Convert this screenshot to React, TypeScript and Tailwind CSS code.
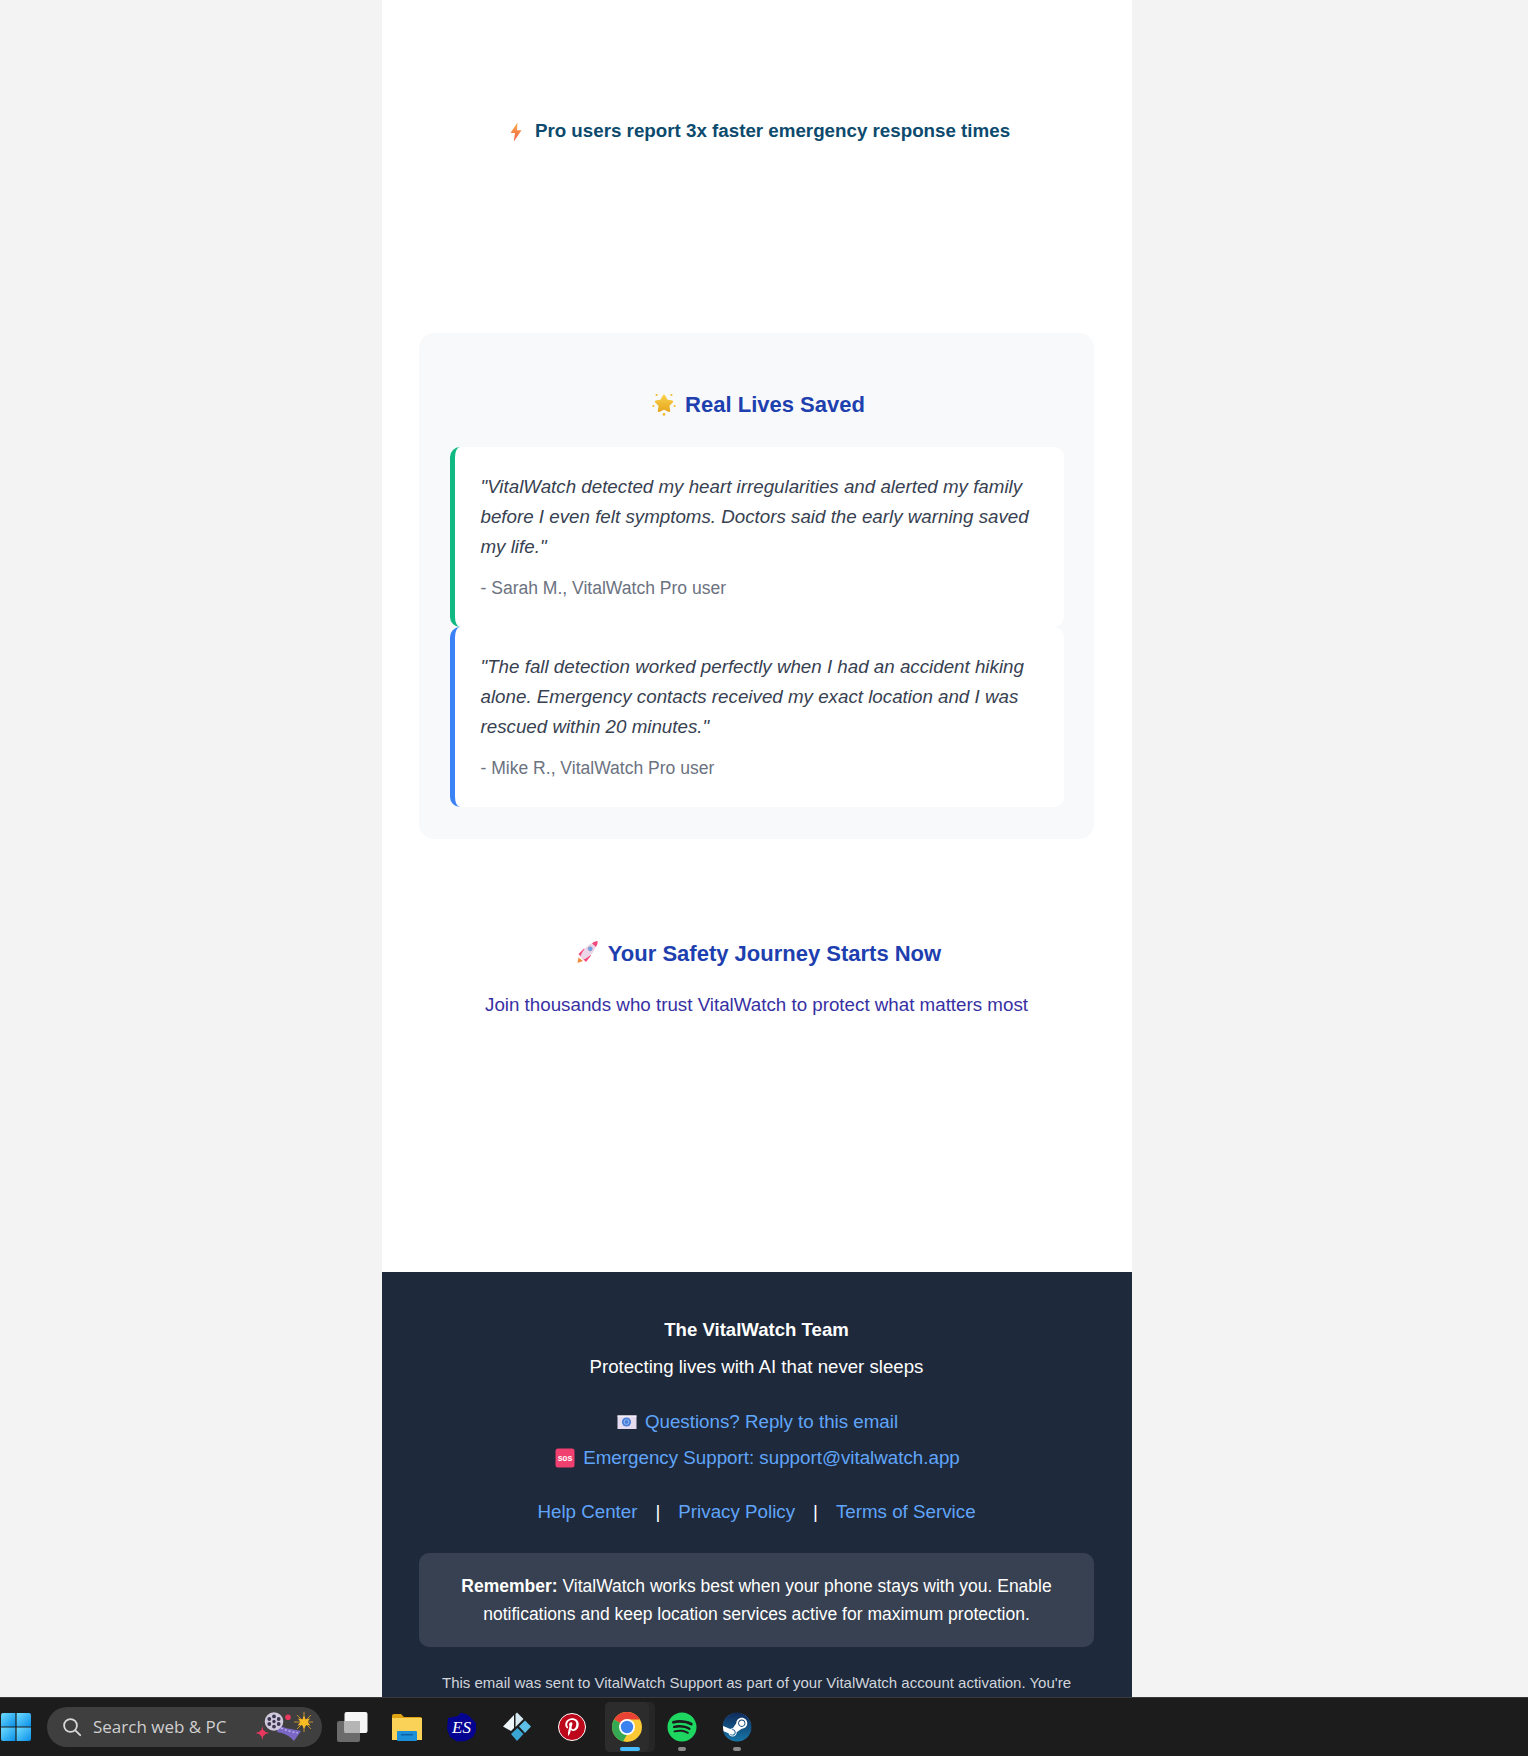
import React from "react";
import { FaPinterestP, FaSpotify, FaSteam } from "react-icons/fa";

const Bolt = () => (
  <svg width="14" height="20" viewBox="0 0 14 20" className="shrink-0">
    <defs>
      <linearGradient id="bolt" x1="0" y1="0" x2="0" y2="1">
        <stop offset="0" stopColor="#fcb04a" />
        <stop offset="1" stopColor="#ee5a44" />
      </linearGradient>
    </defs>
    <path d="M8.5 0.5 L1.5 11 H6 L4.8 19.5 L12.5 8.2 H8 Z" fill="url(#bolt)" />
  </svg>
);

const StarBadge = () => (
  <svg width="24" height="24" viewBox="0 0 24 24" className="shrink-0">
    <defs>
      <linearGradient id="star" x1="0" y1="0" x2="0" y2="1">
        <stop offset="0" stopColor="#f8d048" />
        <stop offset="1" stopColor="#e8a820" />
      </linearGradient>
    </defs>
    <path d="M12 3.6 L14.8 8.6 L20.2 9.6 L16.4 13.6 L17.2 19 L12 16.6 L6.8 19 L7.6 13.6 L3.8 9.6 L9.2 8.6 Z" fill="url(#star)" stroke="url(#star)" strokeWidth="2" strokeLinejoin="round" />
    <circle cx="12" cy="22.4" r="1.4" fill="#f2bd2c" />
    <circle cx="1.4" cy="14" r="1.1" fill="#f2bd2c" />
    <circle cx="22.6" cy="14" r="1.1" fill="#f2bd2c" />
    <circle cx="4.6" cy="3" r="1.1" fill="#f2bd2c" />
    <circle cx="19.4" cy="3" r="1.1" fill="#f2bd2c" />
  </svg>
);

const Rocket = () => (
  <svg width="24" height="24" viewBox="0 0 24 24" className="shrink-0">
    <path d="M2.5 23 L3.5 17.5 L8 21 Z" fill="#f28a3c" />
    <path d="M3.5 14 L9 8.5 L11 10 L6.5 17.5 Z" fill="#f5477a" />
    <path d="M11 22 L16 15.5 L13.5 13 L7 18 Z" fill="#f5477a" />
    <path d="M5.5 16 C8 9 14 4 18.5 2.5 L21 5.5 C20 11 15 17 8.5 19.5 Z" fill="#ead6e6" />
    <path d="M17 3.2 C19 1.8 21.5 1 22.5 1 C23 2 22.2 5 21 7 Z" fill="#f5477a" />
    <circle cx="15.2" cy="8.8" r="2.1" fill="#6aa6ec" stroke="#8d8fb8" strokeWidth="0.6" />
  </svg>
);

const Envelope = () => (
  <svg width="20" height="20" viewBox="0 0 20 20" className="shrink-0">
    <rect x="0.5" y="3.5" width="19" height="13.5" fill="#e6dcf0" />
    <rect x="0.5" y="3.5" width="19" height="1.2" fill="#f6f2fa" />
    <circle cx="9.5" cy="10" r="4.6" fill="#4a80d8" />
    <circle cx="9.5" cy="10" r="2.4" fill="none" stroke="#9dbdf0" strokeWidth="0.9" />
  </svg>
);

const Sos = () => (
  <svg width="20" height="20" viewBox="0 0 20 20" className="shrink-0">
    <rect x="0.5" y="0.5" width="19" height="19" rx="2.5" fill="#f0406f" />
    <text x="10" y="13" textAnchor="middle" fontSize="8" fontWeight="700" fill="#ffffff" fontFamily="'Liberation Mono', monospace">SOS</text>
  </svg>
);

const Quote = ({ border, text, author }: { border: string; text: string; author: string }) => (
  <div className={`rounded-[10px] bg-white border-l-[5px] ${border} pl-[26px] pr-[24px] pt-[25px] pb-[24px]`}>
    <p className="italic text-[18.75px] leading-[30px] text-[#374151] m-0">{text}</p>
    <p className="text-[17.55px] leading-[30px] text-[#6b7280] mt-[11px]">{author}</p>
  </div>
);

const WindowsLogo = () => (
  <svg width="30" height="30" viewBox="0 0 30 30">
    <defs>
      <linearGradient id="win" x1="0" y1="0" x2="1" y2="1">
        <stop offset="0" stopColor="#6fdcff" />
        <stop offset="1" stopColor="#0a8fe8" />
      </linearGradient>
    </defs>
    <path d="M0 3 a2 2 0 0 1 2 -2 H14.4 V14.4 H0 Z" fill="url(#win)" />
    <path d="M15.6 1 H28 a2 2 0 0 1 2 2 V14.4 H15.6 Z" fill="url(#win)" />
    <path d="M0 15.6 H14.4 V29 H2 a2 2 0 0 1 -2 -2 Z" fill="url(#win)" />
    <path d="M15.6 15.6 H30 V27 a2 2 0 0 1 -2 2 H15.6 Z" fill="url(#win)" />
  </svg>
);

const SearchGlyph = () => (
  <svg width="20" height="20" viewBox="0 0 20 20" fill="none" stroke="#d8d8d8" strokeWidth="1.8" strokeLinecap="round" className="shrink-0">
    <circle cx="8.5" cy="8.5" r="6.4" />
    <path d="M13.3 13.3 L18.2 18.2" />
  </svg>
);

const FilmArt = () => (
  <svg width="58" height="30" viewBox="0 0 58 30" className="shrink-0">
    <path d="M24 13 C30 17 38 17 46 19 L39 29 C34 23 28 21 22 20 Z" fill="#7a68c4" />
    <path d="M26 16 C32 19 38 20 43 21" stroke="#c4b8ec" strokeWidth="1.2" fill="none" strokeDasharray="2 2" />
    <circle cx="19" cy="9.5" r="9.3" fill="#d0c8dc" />
    <circle cx="19" cy="9.5" r="1.7" fill="#3c3750" />
    <circle cx="19" cy="4.4" r="1.9" fill="#3c3750" />
    <circle cx="19" cy="14.6" r="1.9" fill="#3c3750" />
    <circle cx="14.3" cy="7" r="1.9" fill="#3c3750" />
    <circle cx="23.7" cy="7" r="1.9" fill="#3c3750" />
    <circle cx="14.3" cy="12" r="1.9" fill="#3c3750" />
    <circle cx="23.7" cy="12" r="1.9" fill="#3c3750" />
    <path d="M7.3 14 L8.6 19.6 L14.4 21 L8.6 22.4 L7.3 28 L6 22.4 L0.2 21 L6 19.6 Z" fill="#e8385e" />
    <circle cx="7.3" cy="21" r="3" fill="#e8385e" />
    <circle cx="33" cy="5.3" r="2.8" fill="#e8385e" />
    <g stroke="#d89a2c" strokeWidth="0.9">
      <path d="M49 0 V20 M39 10 H58 M42 3 L56 17 M56 3 L42 17" />
    </g>
    <path d="M49 3.5 L50.6 7.6 L55 6.4 L52.6 10 L55.5 13.4 L51.2 13 L49 16.8 L47 13 L42.6 13.4 L45.4 10 L43 6.4 L47.4 7.6 Z" fill="#f8bb24" />
  </svg>
);

const TaskView = () => (
  <svg width="32" height="30" viewBox="0 0 32 30" className="shrink-0">
    <rect x="0" y="9" width="23" height="21" rx="2" fill="#6b6b6b" />
    <rect x="7.5" y="0" width="23" height="21" rx="2" fill="#f6f6f6" />
    <rect x="7.5" y="9" width="15.5" height="12" fill="#b5b5b5" />
  </svg>
);

const Folder = () => (
  <svg width="30" height="28" viewBox="0 0 30 28" className="shrink-0">
    <path d="M0 3 a2 2 0 0 1 2 -2 H9 L12 4 H28 a2 2 0 0 1 2 2 V8 H0 Z" fill="#e0a312" />
    <rect x="0" y="5" width="30" height="22" fill="#fbd258" />
    <rect x="5" y="18" width="20" height="10" rx="1" fill="#1b8fd8" />
    <rect x="9" y="21" width="12" height="1.4" fill="#0f5fa0" />
  </svg>
);

const EsIcon = () => (
  <svg width="30" height="30" viewBox="0 0 30 30">
    <path d="M1 6 L11 4 L14 0.5 L21 3 L25 7 L29 11 L29 19 L26 25 L19 29 L10 29.5 L3 25 L0 17 Z" fill="#040490" />
    <text x="14.5" y="21" textAnchor="middle" fontStyle="italic" fontWeight="400" fontSize="17" fill="#ffffff" fontFamily="'Liberation Serif', serif">ES</text>
  </svg>
);

const Kodi = () => (
  <svg width="30" height="30" viewBox="0 0 30 30">
    <path d="M12 3 L12 16 L9 19 L1 14.5 Z" fill="#eef6fa" />
    <path d="M15 0.5 L21.5 7 L13.5 15 L13.5 2 Z" fill="#d6e9f0" />
    <path d="M23 8.5 L29 14.5 L23 21 L17 14.5 Z" fill="#5cc0e6" />
    <path d="M15.5 16 L21.5 22 L15 29 L9 22 Z" fill="#3aa5d3" />
  </svg>
);

const Chrome = () => (
  <svg width="30" height="30" viewBox="0 0 30 30">
    <circle cx="15" cy="15" r="15" fill="#fcc934" />
    <path d="M15 0 A15 15 0 0 1 28 7.5 H15 A7.5 7.5 0 0 0 8.5 11.2 L2 7.5 A15 15 0 0 1 15 0 Z" fill="#ea4335" />
    <path d="M2 7.5 L8.5 11.2 L15 22.5 L11 29.4 A15 15 0 0 1 2 7.5 Z" fill="#34a853" />
    <circle cx="15" cy="15" r="8" fill="#ffffff" />
    <circle cx="15" cy="15" r="6.2" fill="#3a82f0" />
  </svg>
);

const Cell = ({ active, dot, children }: { active?: boolean; dot?: boolean; children: React.ReactNode }) => (
  <div className={`relative w-[44px] h-[50px] flex items-center justify-center ${active ? "rounded-[5px] bg-[#2c2c2c]" : ""}`}>
    {active && <span className="absolute top-0 -right-[6px] w-[10px] h-[50px] rounded-r-[5px] bg-[#262626]" />}
    {active && <span className="absolute inset-0 rounded-[5px] bg-[#2c2c2c]" />}
    <span className="relative flex items-center justify-center">{children}</span>
    {active && <span className="absolute bottom-[1px] left-[15px] w-[20px] h-[4px] rounded-full bg-[#47bdff]" />}
    {dot && <span className="absolute bottom-[1px] left-[18px] w-[8px] h-[4px] rounded-full bg-[#8a8a8a]" />}
  </div>
);

export default function App() {
  return (
    <div className="h-[1756px] flex flex-col overflow-hidden bg-[#f3f3f3] font-['Liberation_Sans',Arial,sans-serif]">
      <main className="flex-1 min-h-0 overflow-hidden pr-[15px]">
        <div className="w-[750px] mx-auto bg-white">
          <div className="h-[272px] pt-[119px] flex justify-center">
            <div className="h-[25px] flex items-center gap-[12px] text-[18.75px] font-bold text-[#0c4a6e] ml-[6px]">
              <Bolt />
              <span>Pro users report 3x faster emergency response times</span>
            </div>
          </div>

          <div className="px-[37.5px]">
            <section className="mt-[61px] rounded-[15px] bg-[#f8f9fb] px-[30.5px] pt-[30px] pb-[32px]">
              <h2 className="h-[84px] pt-[29px] pl-[4px] flex justify-center gap-[9px] text-[22px] leading-[26px] font-bold text-[#1e40af]">
                <StarBadge />
                <span>Real Lives Saved</span>
              </h2>
              <Quote
                border="border-[#10b981]"
                text={'"VitalWatch detected my heart irregularities and alerted my family before I even felt symptoms. Doctors said the early warning saved my life."'}
                author="- Sarah M., VitalWatch Pro user"
              />
              <Quote
                border="border-[#3b82f6]"
                text={'"The fall detection worked perfectly when I had an accident hiking alone. Emergency contacts received my exact location and I was rescued within 20 minutes."'}
                author="- Mike R., VitalWatch Pro user"
              />
            </section>

            <section className="pt-[101px] h-[433px] text-center">
              <h2 className="pl-[3px] flex justify-center gap-[9px] text-[22px] leading-[28px] font-bold text-[#1e40af]">
                <Rocket />
                <span>Your Safety Journey Starts Now</span>
              </h2>
              <p className="mt-[22px] text-[18.75px] leading-[30px] text-[#3730a3]">
                Join thousands who trust VitalWatch to protect what matters most
              </p>
            </section>
          </div>

          <footer className="bg-[#1e293b] px-[37.5px] pt-[43px] pb-[20px] text-center text-white">
            <p className="text-[18.6px] leading-[30px] font-bold">The VitalWatch Team</p>
            <p className="mt-[7px] text-[18.66px] leading-[30px]">Protecting lives with AI that never sleeps</p>
            <div className="mt-[25px] pl-[2px] text-[18.76px] leading-[30px] text-[#60a5fa]">
              <div className="mt-[6px] flex justify-center items-center gap-[8px]"><Envelope /><span>Questions? Reply to this email</span></div>
              <div className="mt-[6px] flex justify-center items-center gap-[8px]"><Sos /><span>Emergency Support: support@vitalwatch.app</span></div>
            </div>
            <div className="mt-[24px] flex justify-center gap-[18px] text-[18.76px] leading-[30px]">
              <span className="text-[#60a5fa]">Help Center</span>
              <span>|</span>
              <span className="text-[#60a5fa]">Privacy Policy</span>
              <span>|</span>
              <span className="text-[#60a5fa]">Terms of Service</span>
            </div>
            <div className="mt-[26px] rounded-[10px] bg-[#374151] py-[19px] px-[30px] text-[17.5px] leading-[28px]">
              <strong className="font-bold">Remember:</strong> VitalWatch works best when your phone stays with you. Enable notifications and keep location services active for maximum protection.
            </div>
            <p className="mt-[24px] text-[15px] leading-[24px] text-[#d1d5db]">
              This email was sent to VitalWatch Support as part of your VitalWatch account activation. You're receiving this because you signed up for protection.
            </p>
          </footer>
        </div>
      </main>

      <div className="h-[59px] shrink-0 bg-[#1c1c1c] border-t border-[#3a3a3a] flex items-center">
        <div className="ml-[1px] w-[30px] flex"><WindowsLogo /></div>
        <div className="ml-[16px] w-[275px] h-[40px] rounded-full bg-[#3f3f3f] flex items-center pl-[15px] pr-[9px] gap-[11px] font-['Open_Sans',sans-serif] text-[17px] text-[#cfcfcf]">
          <SearchGlyph />
          <span className="flex-1 whitespace-nowrap">Search web &amp; PC</span>
          <FilmArt />
        </div>
        <div className="ml-[15px]"><TaskView /></div>
        <div className="ml-[23px]"><Folder /></div>
        <div className="ml-[18px] flex gap-[11px] items-center">
          <Cell><EsIcon /></Cell>
          <Cell><Kodi /></Cell>
          <Cell>
            <span className="w-[28px] h-[28px] rounded-full bg-[#bd081c] border border-white flex items-center justify-center text-white text-[18px]"><FaPinterestP /></span>
          </Cell>
          <Cell active><Chrome /></Cell>
          <Cell dot><FaSpotify className="text-[#1ed760] text-[30px]" /></Cell>
          <Cell dot>
            <span className="relative w-[30px] h-[30px] flex items-center justify-center">
              <span className="absolute inset-[1px] rounded-full bg-white" />
              <svg width="0" height="0" className="absolute">
                <defs>
                  <linearGradient id="steam" x1="0" y1="0" x2="0" y2="1">
                    <stop offset="0" stopColor="#0f2a5a" />
                    <stop offset="1" stopColor="#1676a8" />
                  </linearGradient>
                </defs>
              </svg>
              <FaSteam className="relative text-[30px] fill-[url(#steam)]" />
            </span>
          </Cell>
        </div>
      </div>
    </div>
  );
}
